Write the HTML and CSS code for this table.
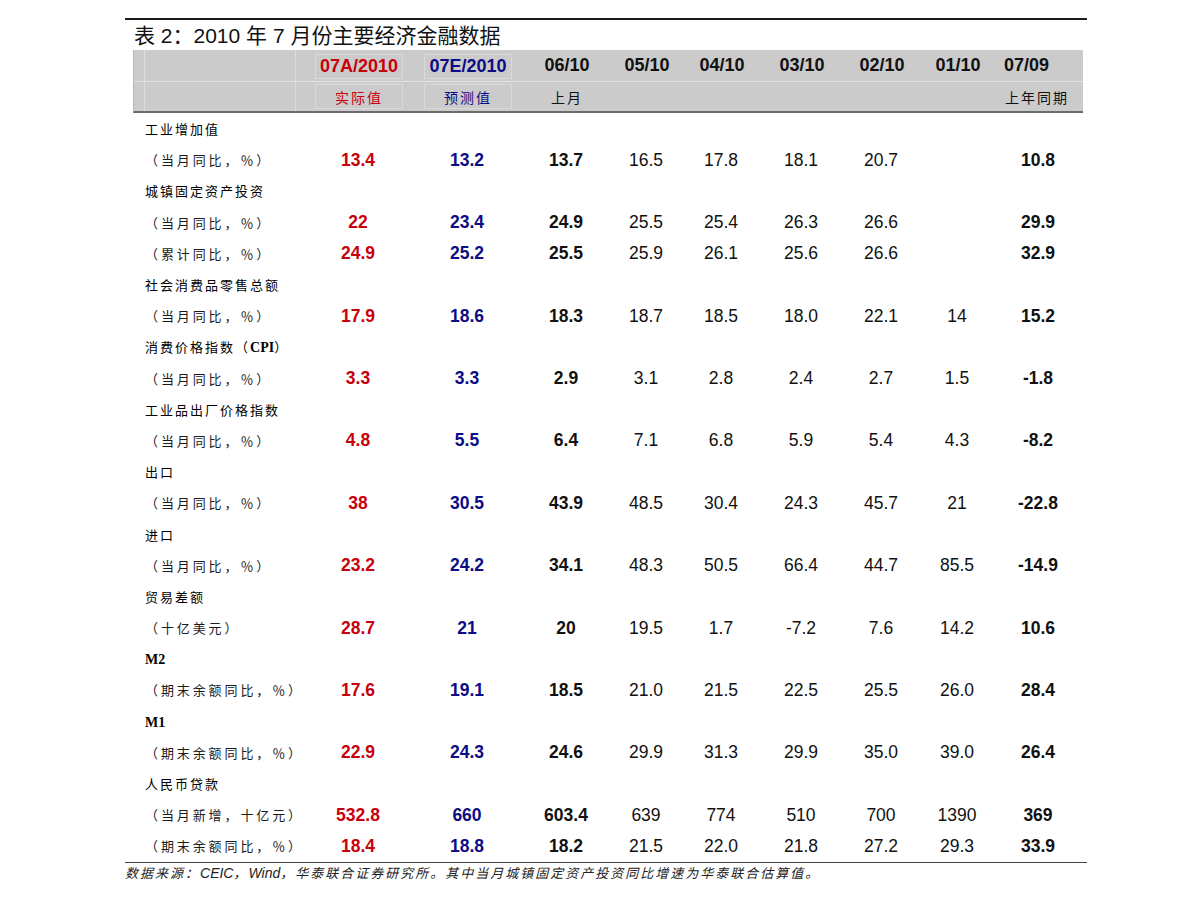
FILE: index.html
```html
<!DOCTYPE html>
<html lang="zh-CN">
<head>
<meta charset="utf-8">
<title>表 2：2010 年 7 月份主要经济金融数据</title>
<link rel="stylesheet" href="styles.css">
</head>
<body>
<div class="page">
  <div class="title">表 2：2010 年 7 月份主要经济金融数据</div>
  <div class="tablewrap">
    <div class="head">
      <div class="hrow hrow1">
        <div class="hlabel"><span class="hsub"></span></div>
        <div class="hcell"><span class="hbox red">07A/2010</span></div>
        <div class="hcell"><span class="hbox blue">07E/2010</span></div>
        <div class="hcell">06/10</div>
        <div class="hcell">05/10</div>
        <div class="hcell">04/10</div>
        <div class="hcell">03/10</div>
        <div class="hcell">02/10</div>
        <div class="hcell">01/10</div>
        <div class="hcell last">07/09</div>
      </div>
      <div class="hrow hrow2">
        <div class="hlabel"><span class="hsub"></span></div>
        <div class="hcell"><span class="hbox small red">实际值</span></div>
        <div class="hcell"><span class="hbox small blue">预测值</span></div>
        <div class="hcell small">上月</div>
        <div class="hcell"></div>
        <div class="hcell"></div>
        <div class="hcell"></div>
        <div class="hcell"></div>
        <div class="hcell"></div>
        <div class="hcell small last2">上年同期</div>
      </div>
    </div>

    <div class="body">
      <div class="row cat"><div class="lbl">工业增加值</div></div>
      <div class="row"><div class="lbl sub">（当月同比，％）</div><div class="n red b">13.4</div><div class="n blue b">13.2</div><div class="n b">13.7</div><div class="n">16.5</div><div class="n">17.8</div><div class="n">18.1</div><div class="n">20.7</div><div class="n"></div><div class="n b">10.8</div></div>

      <div class="row cat"><div class="lbl">城镇固定资产投资</div></div>
      <div class="row"><div class="lbl sub">（当月同比，％）</div><div class="n red b">22</div><div class="n blue b">23.4</div><div class="n b">24.9</div><div class="n">25.5</div><div class="n">25.4</div><div class="n">26.3</div><div class="n">26.6</div><div class="n"></div><div class="n b">29.9</div></div>
      <div class="row"><div class="lbl sub">（累计同比，％）</div><div class="n red b">24.9</div><div class="n blue b">25.2</div><div class="n b">25.5</div><div class="n">25.9</div><div class="n">26.1</div><div class="n">25.6</div><div class="n">26.6</div><div class="n"></div><div class="n b">32.9</div></div>

      <div class="row cat"><div class="lbl">社会消费品零售总额</div></div>
      <div class="row"><div class="lbl sub">（当月同比，％）</div><div class="n red b">17.9</div><div class="n blue b">18.6</div><div class="n b">18.3</div><div class="n">18.7</div><div class="n">18.5</div><div class="n">18.0</div><div class="n">22.1</div><div class="n">14</div><div class="n b">15.2</div></div>

      <div class="row cat"><div class="lbl">消费价格指数（<span class="latin">CPI</span>）</div></div>
      <div class="row"><div class="lbl sub">（当月同比，％）</div><div class="n red b">3.3</div><div class="n blue b">3.3</div><div class="n b">2.9</div><div class="n">3.1</div><div class="n">2.8</div><div class="n">2.4</div><div class="n">2.7</div><div class="n">1.5</div><div class="n b">-1.8</div></div>

      <div class="row cat"><div class="lbl">工业品出厂价格指数</div></div>
      <div class="row"><div class="lbl sub">（当月同比，％）</div><div class="n red b">4.8</div><div class="n blue b">5.5</div><div class="n b">6.4</div><div class="n">7.1</div><div class="n">6.8</div><div class="n">5.9</div><div class="n">5.4</div><div class="n">4.3</div><div class="n b">-8.2</div></div>

      <div class="row cat"><div class="lbl">出口</div></div>
      <div class="row"><div class="lbl sub">（当月同比，％）</div><div class="n red b">38</div><div class="n blue b">30.5</div><div class="n b">43.9</div><div class="n">48.5</div><div class="n">30.4</div><div class="n">24.3</div><div class="n">45.7</div><div class="n">21</div><div class="n b">-22.8</div></div>

      <div class="row cat"><div class="lbl">进口</div></div>
      <div class="row"><div class="lbl sub">（当月同比，％）</div><div class="n red b">23.2</div><div class="n blue b">24.2</div><div class="n b">34.1</div><div class="n">48.3</div><div class="n">50.5</div><div class="n">66.4</div><div class="n">44.7</div><div class="n">85.5</div><div class="n b">-14.9</div></div>

      <div class="row cat"><div class="lbl">贸易差额</div></div>
      <div class="row"><div class="lbl sub">（十亿美元）</div><div class="n red b">28.7</div><div class="n blue b">21</div><div class="n b">20</div><div class="n">19.5</div><div class="n">1.7</div><div class="n">-7.2</div><div class="n">7.6</div><div class="n">14.2</div><div class="n b">10.6</div></div>

      <div class="row cat"><div class="lbl"><span class="latin">M2</span></div></div>
      <div class="row"><div class="lbl sub">（期末余额同比，％）</div><div class="n red b">17.6</div><div class="n blue b">19.1</div><div class="n b">18.5</div><div class="n">21.0</div><div class="n">21.5</div><div class="n">22.5</div><div class="n">25.5</div><div class="n">26.0</div><div class="n b">28.4</div></div>

      <div class="row cat"><div class="lbl"><span class="latin">M1</span></div></div>
      <div class="row"><div class="lbl sub">（期末余额同比，％）</div><div class="n red b">22.9</div><div class="n blue b">24.3</div><div class="n b">24.6</div><div class="n">29.9</div><div class="n">31.3</div><div class="n">29.9</div><div class="n">35.0</div><div class="n">39.0</div><div class="n b">26.4</div></div>

      <div class="row cat"><div class="lbl">人民币贷款</div></div>
      <div class="row"><div class="lbl sub">（当月新增，十亿元）</div><div class="n red b">532.8</div><div class="n blue b">660</div><div class="n b">603.4</div><div class="n">639</div><div class="n">774</div><div class="n">510</div><div class="n">700</div><div class="n">1390</div><div class="n b">369</div></div>
      <div class="row"><div class="lbl sub">（期末余额同比，％）</div><div class="n red b">18.4</div><div class="n blue b">18.8</div><div class="n b">18.2</div><div class="n">21.5</div><div class="n">22.0</div><div class="n">21.8</div><div class="n">27.2</div><div class="n">29.3</div><div class="n b">33.9</div></div>
    </div>
  </div>
  <div class="foot">数据来源：<span class="fl">CEIC</span>，<span class="fl">Wind</span>，华泰联合证券研究所。其中当月城镇固定资产投资同比增速为华泰联合估算值。</div>
</div>
</body>
</html>
```

FILE: styles.css
```css
* { box-sizing: border-box; }
html, body { margin: 0; padding: 0; background: #fff; }
body {
  font-family: "Liberation Sans", "Noto Sans CJK SC", sans-serif;
  color: #000;
}
.page {
  margin: 18px 0 0 125px;
  width: 962px;
  border-top: 2px solid #1a1a1a;
}
.title {
  height: 30px;
  line-height: 31px;
  padding-left: 9px;
  font-size: 21px;
  color: #111;
  white-space: nowrap;
}
.tablewrap {
  padding: 0 4px 0 8px;
  border-bottom: 1px solid #444;
}
.head {
  background: #cbcbcb;
  border-bottom: 2px solid #6b6b6b;
  border-left: 1px solid #b8b8b8;
}
.hrow {
  display: grid;
  grid-template-columns: 170px 110px 108px 90px 70px 80px 80px 80px 72px 90px;
  height: 32px;
}
.hrow1 { border-bottom: 1px solid #e2e2e2; }
.hrow2 { height: 29px; }
.hlabel {
  border-left: 11px solid #cbcbcb;
  border-right: 1px solid #dcdcdc;
  margin-right: 8px;
}
.hsub {
  display: block;
  height: 100%;
  border-left: 1px solid #dedede;
  margin-left: -1px;
}
.hcell {
  display: flex;
  align-items: center;
  justify-content: center;
  font-weight: bold;
  font-size: 18px;
  color: #111;
  white-space: nowrap;
}
.hcell.small, .hbox.small {
  font-family: "Noto Sans CJK SC", sans-serif;
  font-weight: normal;
  font-size: 14px;
  letter-spacing: 2px;
}
.hcell.last { justify-content: flex-start; padding-left: 10px; }
.hcell.last2 { justify-content: flex-start; padding-left: 11px; }
.hbox {
  display: flex;
  align-items: center;
  justify-content: center;
  width: 88px;
  height: 25px;
  border: 1px solid #dadada;
}
.hrow1 .hbox { margin-top: 1px; }
.red { color: #c8000c; }
.blue { color: #0c0c84; }

.row {
  display: grid;
  grid-template-columns: 170px 110px 108px 90px 70px 80px 80px 80px 72px 90px;
  height: 31.2px;
  align-items: center;
}
.lbl {
  padding-left: 12px;
  font-family: "Noto Sans CJK SC", sans-serif;
  font-size: 13px;
  letter-spacing: 2px;
  color: #000;
  white-space: nowrap;
}
.lbl.sub {
  letter-spacing: 2.9px;
  color: #1a1a1a;
}
.latin {
  font-family: "Liberation Serif", serif;
  font-weight: bold;
  font-size: 14px;
  letter-spacing: 0;
}
.n {
  text-align: center;
  font-size: 17.5px;
  color: #111;
  white-space: nowrap;
  padding-top: 1px;
}
.n.b { font-weight: bold; }
.n.red { color: #c8000c; }
.n.blue { color: #0c0c84; }

.foot {
  padding-top: 0;
  font-family: "Noto Sans CJK SC", sans-serif;
  font-style: italic;
  font-size: 13px;
  letter-spacing: 2px;
  color: #222;
  white-space: nowrap;
}
.fl {
  font-family: "Liberation Sans", sans-serif;
  font-size: 14px;
  letter-spacing: 0;
}
```
